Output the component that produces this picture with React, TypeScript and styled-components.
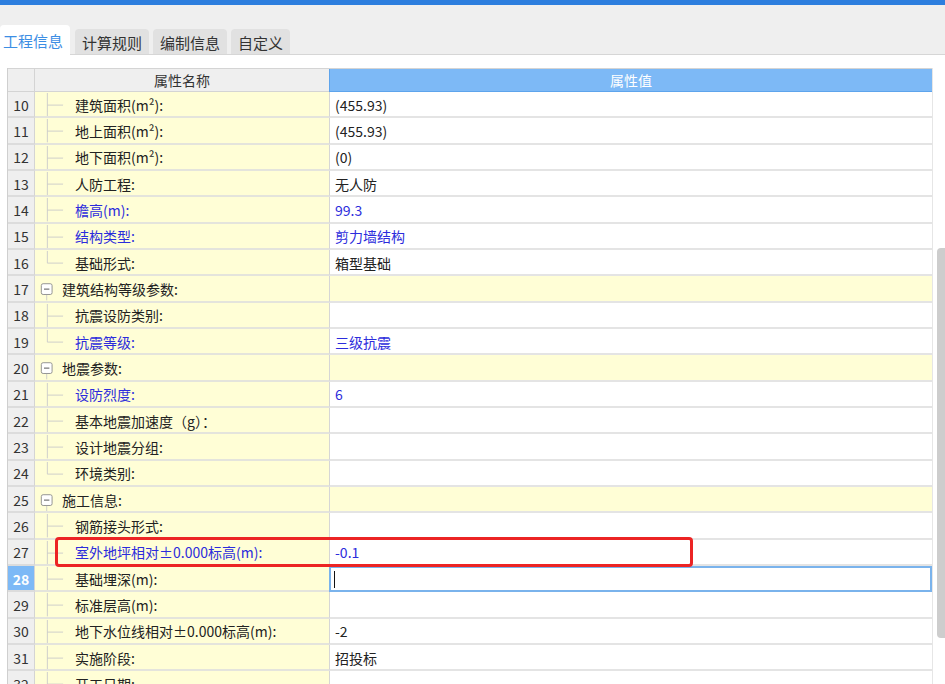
import * as React from "react";
import styled, { createGlobalStyle } from "styled-components";

type Row = {
  no: number;
  label: string;
  value?: string;
  kind?: "group" | "child" | "last";
  blue?: boolean;
  editing?: boolean;
};

const rows: Row[] = [
  { no: 10, label: "建筑面积(m²):", value: "(455.93)" },
  { no: 11, label: "地上面积(m²):", value: "(455.93)" },
  { no: 12, label: "地下面积(m²):", value: "(0)" },
  { no: 13, label: "人防工程:", value: "无人防" },
  { no: 14, label: "檐高(m):", value: "99.3", blue: true },
  { no: 15, label: "结构类型:", value: "剪力墙结构", blue: true },
  { no: 16, label: "基础形式:", value: "箱型基础", kind: "last" },
  { no: 17, label: "建筑结构等级参数:", kind: "group" },
  { no: 18, label: "抗震设防类别:" },
  { no: 19, label: "抗震等级:", value: "三级抗震", blue: true, kind: "last" },
  { no: 20, label: "地震参数:", kind: "group" },
  { no: 21, label: "设防烈度:", value: "6", blue: true },
  { no: 22, label: "基本地震加速度（g）：" },
  { no: 23, label: "设计地震分组:" },
  { no: 24, label: "环境类别:", kind: "last" },
  { no: 25, label: "施工信息:", kind: "group" },
  { no: 26, label: "钢筋接头形式:" },
  { no: 27, label: "室外地坪相对±0.000标高(m):", value: "-0.1", blue: true },
  { no: 28, label: "基础埋深(m):", editing: true },
  { no: 29, label: "标准层高(m):" },
  { no: 30, label: "地下水位线相对±0.000标高(m):", value: "-2" },
  { no: 31, label: "实施阶段:", value: "招投标" },
  { no: 32, label: "开工日期:" },
  { no: 33, label: "竣工日期:" },
];

const tabs = ["工程信息", "计算规则", "编制信息", "自定义"];

function TreeGuide({ kind }: { kind?: Row["kind"] }) {
  if (kind === "group") {
    return (
      <GuideSvg width="27" height="26" viewBox="0 0 27 26">
        <rect x="5.5" y="7.5" width="12" height="12" rx="2" fill="#fff" stroke="#8a8a8a" />
        <line x1="8.5" y1="13.5" x2="14.5" y2="13.5" stroke="#444" />
        <line x1="11.5" y1="20" x2="11.5" y2="26" stroke="#c9c9c9" />
      </GuideSvg>
    );
  }
  return (
    <GuideSvg width="40" height="26" viewBox="0 0 40 26">
      <line x1="11.5" y1="0" x2="11.5" y2={kind === "last" ? 13.5 : 26} stroke="#c9c9c9" />
      <line x1="11.5" y1="13.5" x2="29" y2="13.5" stroke="#c9c9c9" />
    </GuideSvg>
  );
}

export default function App() {
  return (
    <>
      <GlobalStyle />
      <Page>
        <TopBar />
        <TabStrip>
          {tabs.map((t, i) => (
            <Tab key={t} $active={i === 0}>
              {t}
            </Tab>
          ))}
        </TabStrip>
        <Body>
          <Grid>
            <HeaderRow>
              <HeadNo />
              <HeadName>属性名称</HeadName>
              <HeadValue>属性值</HeadValue>
            </HeaderRow>
            {rows.map((r) => (
              <DataRow key={r.no}>
                <NoCell $active={!!r.editing}>{r.no}</NoCell>
                <NameCell $blue={!!r.blue}>
                  <TreeGuide kind={r.kind} />
                  {r.label}
                </NameCell>
                <ValueCell $group={r.kind === "group"} $blue={!!r.blue} $editing={!!r.editing}>
                  {r.editing ? <Caret /> : r.value}
                </ValueCell>
              </DataRow>
            ))}
            <Highlight />
          </Grid>
          <ScrollTrack>
            <ScrollThumb />
          </ScrollTrack>
        </Body>
      </Page>
    </>
  );
}

const GlobalStyle = createGlobalStyle`
  body {
    margin: 0;
    background: #fff;
    font-family: "Microsoft YaHei", "Noto Sans CJK SC", "Noto Sans", sans-serif;
  }
`;

const Page = styled.div`
  width: 945px;
  height: 684px;
  overflow: hidden;
  display: flex;
  flex-direction: column;
`;

const TopBar = styled.div`
  height: 5px;
  background: #2d7ede;
  flex-shrink: 0;
`;

const TabStrip = styled.div`
  height: 49px;
  flex-shrink: 0;
  background: #efefef;
  border-bottom: 1px solid #d6d6d6;
  display: flex;
  align-items: flex-end;
  gap: 4px;
`;

const Tab = styled.div<{ $active: boolean }>`
  height: ${(p) => (p.$active ? "30px" : "25px")};
  padding: ${(p) => (p.$active ? "0 7px 0 3px" : "2px 7px 0")};
  margin-right: ${(p) => (p.$active ? "1px" : "0")};
  box-sizing: border-box;
  margin-bottom: ${(p) => (p.$active ? "-1px" : "0")};
  background: ${(p) => (p.$active ? "#fff" : "#e1e1e1")};
  border-radius: 4px 4px 0 0;
  color: ${(p) => (p.$active ? "#3c8ee4" : "#333")};
  font-size: 15px;
  display: flex;
  align-items: center;
`;

const Body = styled.div`
  flex: 1;
  display: flex;
  padding: 13px 0 0 7px;
  min-height: 0;
`;

const Grid = styled.div`
  position: relative;
  width: 925px;
  border-left: 1px solid #cfcfcf;
  box-sizing: border-box;
  overflow: hidden;
`;

const HeaderRow = styled.div`
  display: grid;
  grid-template-columns: 27px 294px 1fr;
  height: 24px;
  border-top: 1px solid #d4d4d4;
  box-sizing: border-box;
`;

const HeadNo = styled.div`
  background: #efefef;
  border-right: 1px solid #d4d4d4;
  border-bottom: 1px solid #d4d4d4;
`;

const HeadName = styled.div`
  background: #efefef;
  border-bottom: 1px solid #d4d4d4;
  color: #333;
  font-size: 14px;
  display: flex;
  align-items: center;
  justify-content: center;
  padding-bottom: 1px;
`;

const HeadValue = styled.div`
  background: #7db9f6;
  border-bottom: 1px solid #5ea4ec;
  border-left: 1px solid #5ea4ec;
  color: #fff;
  font-size: 14px;
  display: flex;
  align-items: center;
  justify-content: center;
  padding-bottom: 1px;
`;

const DataRow = styled.div`
  display: grid;
  grid-template-columns: 27px 294px 1fr;
  height: 26.33px;
`;

const NoCell = styled.div<{ $active: boolean }>`
  background: ${(p) => (p.$active ? "#7db9f6" : "#efefef")};
  color: ${(p) => (p.$active ? "#fff" : "#333")};
  font-weight: ${(p) => (p.$active ? 700 : 400)};
  border-right: 1px solid #d4d4d4;
  border-bottom: 2px solid #dcdcdc;
  font-size: 14px;
  display: flex;
  align-items: center;
  justify-content: center;
  padding-top: 1px;
`;

const NameCell = styled.div<{ $blue: boolean }>`
  background: #fffed6;
  color: ${(p) => (p.$blue ? "#2c2cdc" : "#222")};
  border-bottom: 2px solid #e4e4dc;
  font-size: 14px;
  display: flex;
  align-items: center;
  white-space: nowrap;
  overflow: hidden;
  padding-top: 1px;
`;

const GuideSvg = styled.svg`
  flex-shrink: 0;
  align-self: stretch;
  height: 100%;
`;

const ValueCell = styled.div<{ $group: boolean; $blue: boolean; $editing: boolean }>`
  background: ${(p) => (p.$group ? "#fffed6" : "#fff")};
  color: ${(p) => (p.$blue ? "#2c2cdc" : "#222")};
  border-left: 1px solid #d6d6d6;
  border-bottom: 2px solid #e4e4e4;
  font-size: 14px;
  display: flex;
  align-items: center;
  padding-left: 5px;
  padding-top: 1px;
  box-sizing: border-box;
  ${(p) =>
    p.$editing &&
    `
    border: 2px solid #7ab3ec;
    padding-left: 3px;
  `}
`;

const Caret = styled.span`
  width: 1px;
  height: 17px;
  background: #111;
`;

const Highlight = styled.div`
  position: absolute;
  left: 47px;
  top: 469px;
  width: 638px;
  height: 30px;
  border: 3px solid #ec2424;
  border-radius: 4px;
  box-sizing: border-box;
  pointer-events: none;
`;

const ScrollTrack = styled.div`
  width: 13px;
  position: relative;
  background: #fff;
  border-left: 1px solid #e6e6e6;
  box-sizing: border-box;
`;

const ScrollThumb = styled.div`
  position: absolute;
  left: 4px;
  right: 0;
  top: 180px;
  height: 390px;
  background: #cdcdcd;
  border-radius: 4px 0 0 4px;
`;
